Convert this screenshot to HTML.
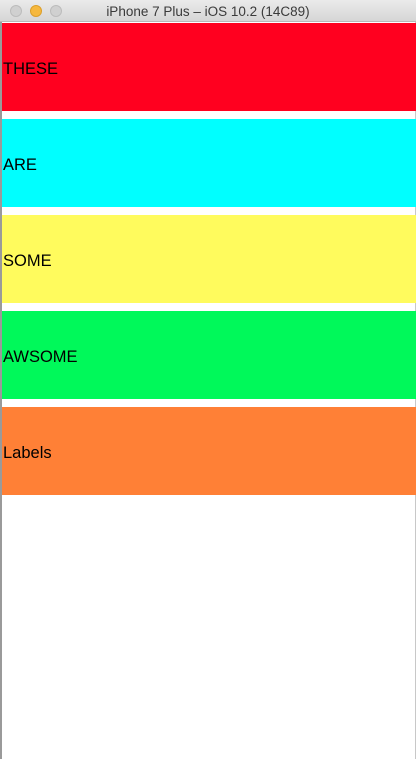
<!DOCTYPE html>
<html><head><style>
body{margin:0;width:416px;height:759px;background:#fff;position:relative;overflow:hidden;font-family:"Liberation Sans",sans-serif}
.tb{position:absolute;left:0;top:0;width:416px;height:22px;background:linear-gradient(#ebebeb,#d6d6d6);border-bottom:1px solid #b8b8b8;box-sizing:border-box;text-align:center;font-size:13.5px;line-height:23px;color:#3a3a3a}
.d{position:absolute;top:5px;width:12px;height:12px;border-radius:50%;background:#d0d0d0;border:1px solid #bcbcbc;box-sizing:border-box}
.lb{position:absolute;left:0;top:22px;width:2px;height:737px;background:#9a9a9a}
.rb{position:absolute;right:0;top:22px;width:1px;height:737px;background:#c8c8c8}
.r{position:absolute;left:2px;width:414px;height:88px;font-size:16.5px;line-height:92px;padding-left:1px;box-sizing:border-box;color:#000;overflow:hidden}
</style></head><body>
<div class="tb">iPhone 7 Plus – iOS 10.2 (14C89)</div>
<div class="d" style="left:10px"></div>
<div class="d" style="left:30px;background:#f6b83e;border-color:#dc9f2a"></div>
<div class="d" style="left:50px"></div>
<div class="lb"></div><div class="rb"></div>
<div class="r" style="top:23px;background:#ff001f">THESE</div>
<div class="r" style="top:119px;background:#00ffff">ARE</div>
<div class="r" style="top:215px;background:#fffb5d">SOME</div>
<div class="r" style="top:311px;background:#00f95a">AWSOME</div>
<div class="r" style="top:407px;background:#ff8036">Labels</div>
</body></html>
